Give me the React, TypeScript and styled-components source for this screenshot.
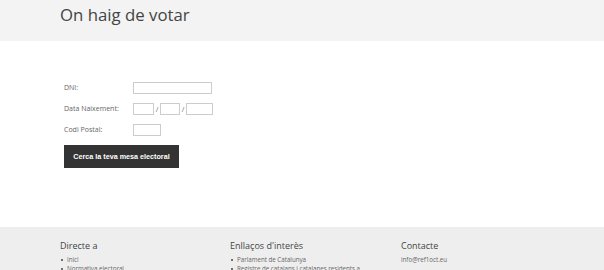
import React from "react";
import styled, { createGlobalStyle } from "styled-components";

const Global = createGlobalStyle`
  html, body { margin: 0; padding: 0; background: #fff; }
  body { font-family: "Open Sans", "Liberation Sans", sans-serif; color: #444; }
`;

const Container = styled.div`
  width: 484px;
  margin: 0 auto;
`;

const Header = styled.header`
  background: #f3f3f3;
  height: 41px;
  box-sizing: border-box;
  padding-top: 3px;
`;

const Title = styled.h1`
  margin: 0;
  font-size: 16.8px;
  line-height: 24px;
  font-weight: 400;
  color: #444;
`;

const Main = styled.main`
  padding: 41px 0 59px 0;
`;

const Form = styled.form`
  display: flex;
  flex-direction: column;
  gap: 9px;
  align-items: flex-start;
  padding-left: 4px;
`;

const Row = styled.div`
  display: flex;
  align-items: center;
  height: 12px;
`;

const Label = styled.label`
  width: 69px;
  flex: none;
  font-size: 7px;
  color: #666;
  line-height: 12px;
`;

const Input = styled.input<{ $w: number }>`
  width: ${(p) => p.$w}px;
  height: 12px;
  box-sizing: border-box;
  border: 1px solid #ccc;
  padding: 0;
  margin: 0;
  background: #fff;
  outline: none;
  flex: none;
`;

const Slash = styled.span`
  font-size: 7px;
  color: #666;
  width: 6px;
  text-align: center;
`;

const Button = styled.button`
  width: 115px;
  height: 23px;
  background: #333;
  color: #fff;
  border: 0;
  margin: 0;
  padding: 0;
  font-family: "Liberation Sans", Arial, sans-serif;
  font-weight: 700;
  font-size: 7.2px;
`;

const Footer = styled.footer`
  background: #eee;
  padding-top: 13px;
  height: 43px;
  box-sizing: border-box;
  overflow: hidden;
`;

const Cols = styled.div`
  display: grid;
  grid-template-columns: 170px 171px 1fr;
`;

const ColTitle = styled.h3`
  margin: 0 0 3px;
  font-size: 9px;
  line-height: 12px;
  font-weight: 400;
  color: #444;
`;

const List = styled.ul`
  margin: 0;
  padding: 0;
  list-style: none;
`;

const Item = styled.li`
  font-size: 6.2px;
  line-height: 9px;
  color: #666;
  display: flex;
  align-items: center;
  gap: 4px;
  padding-left: 1px;
  &::before {
    content: "";
    width: 2px;
    height: 2px;
    background: #444;
    border-radius: 1px;
  }
`;

const Text = styled.div`
  font-size: 6.2px;
  line-height: 9px;
  color: #666;
`;

export default function App() {
  return (
    <>
      <Global />
      <Header>
        <Container>
          <Title>On haig de votar</Title>
        </Container>
      </Header>
      <Main>
        <Container>
          <Form onSubmit={(e) => e.preventDefault()}>
            <Row>
              <Label>DNI:</Label>
              <Input $w={79} />
            </Row>
            <Row>
              <Label>Data Naixement:</Label>
              <Input $w={21} />
              <Slash>/</Slash>
              <Input $w={20} />
              <Slash>/</Slash>
              <Input $w={27} />
            </Row>
            <Row>
              <Label>Codi Postal:</Label>
              <Input $w={28} />
            </Row>
            <Button type="submit">Cerca la teva mesa electoral</Button>
          </Form>
        </Container>
      </Main>
      <Footer>
        <Container>
          <Cols>
            <div>
              <ColTitle>Directe a</ColTitle>
              <List>
                <Item>Inici</Item>
                <Item>Normativa electoral</Item>
              </List>
            </div>
            <div>
              <ColTitle>Enllaços d'interès</ColTitle>
              <List>
                <Item>Parlament de Catalunya</Item>
                <Item>Registre de catalans i catalanes residents a</Item>
              </List>
            </div>
            <div>
              <ColTitle>Contacte</ColTitle>
              <Text>info@ref1oct.eu</Text>
            </div>
          </Cols>
        </Container>
      </Footer>
    </>
  );
}
